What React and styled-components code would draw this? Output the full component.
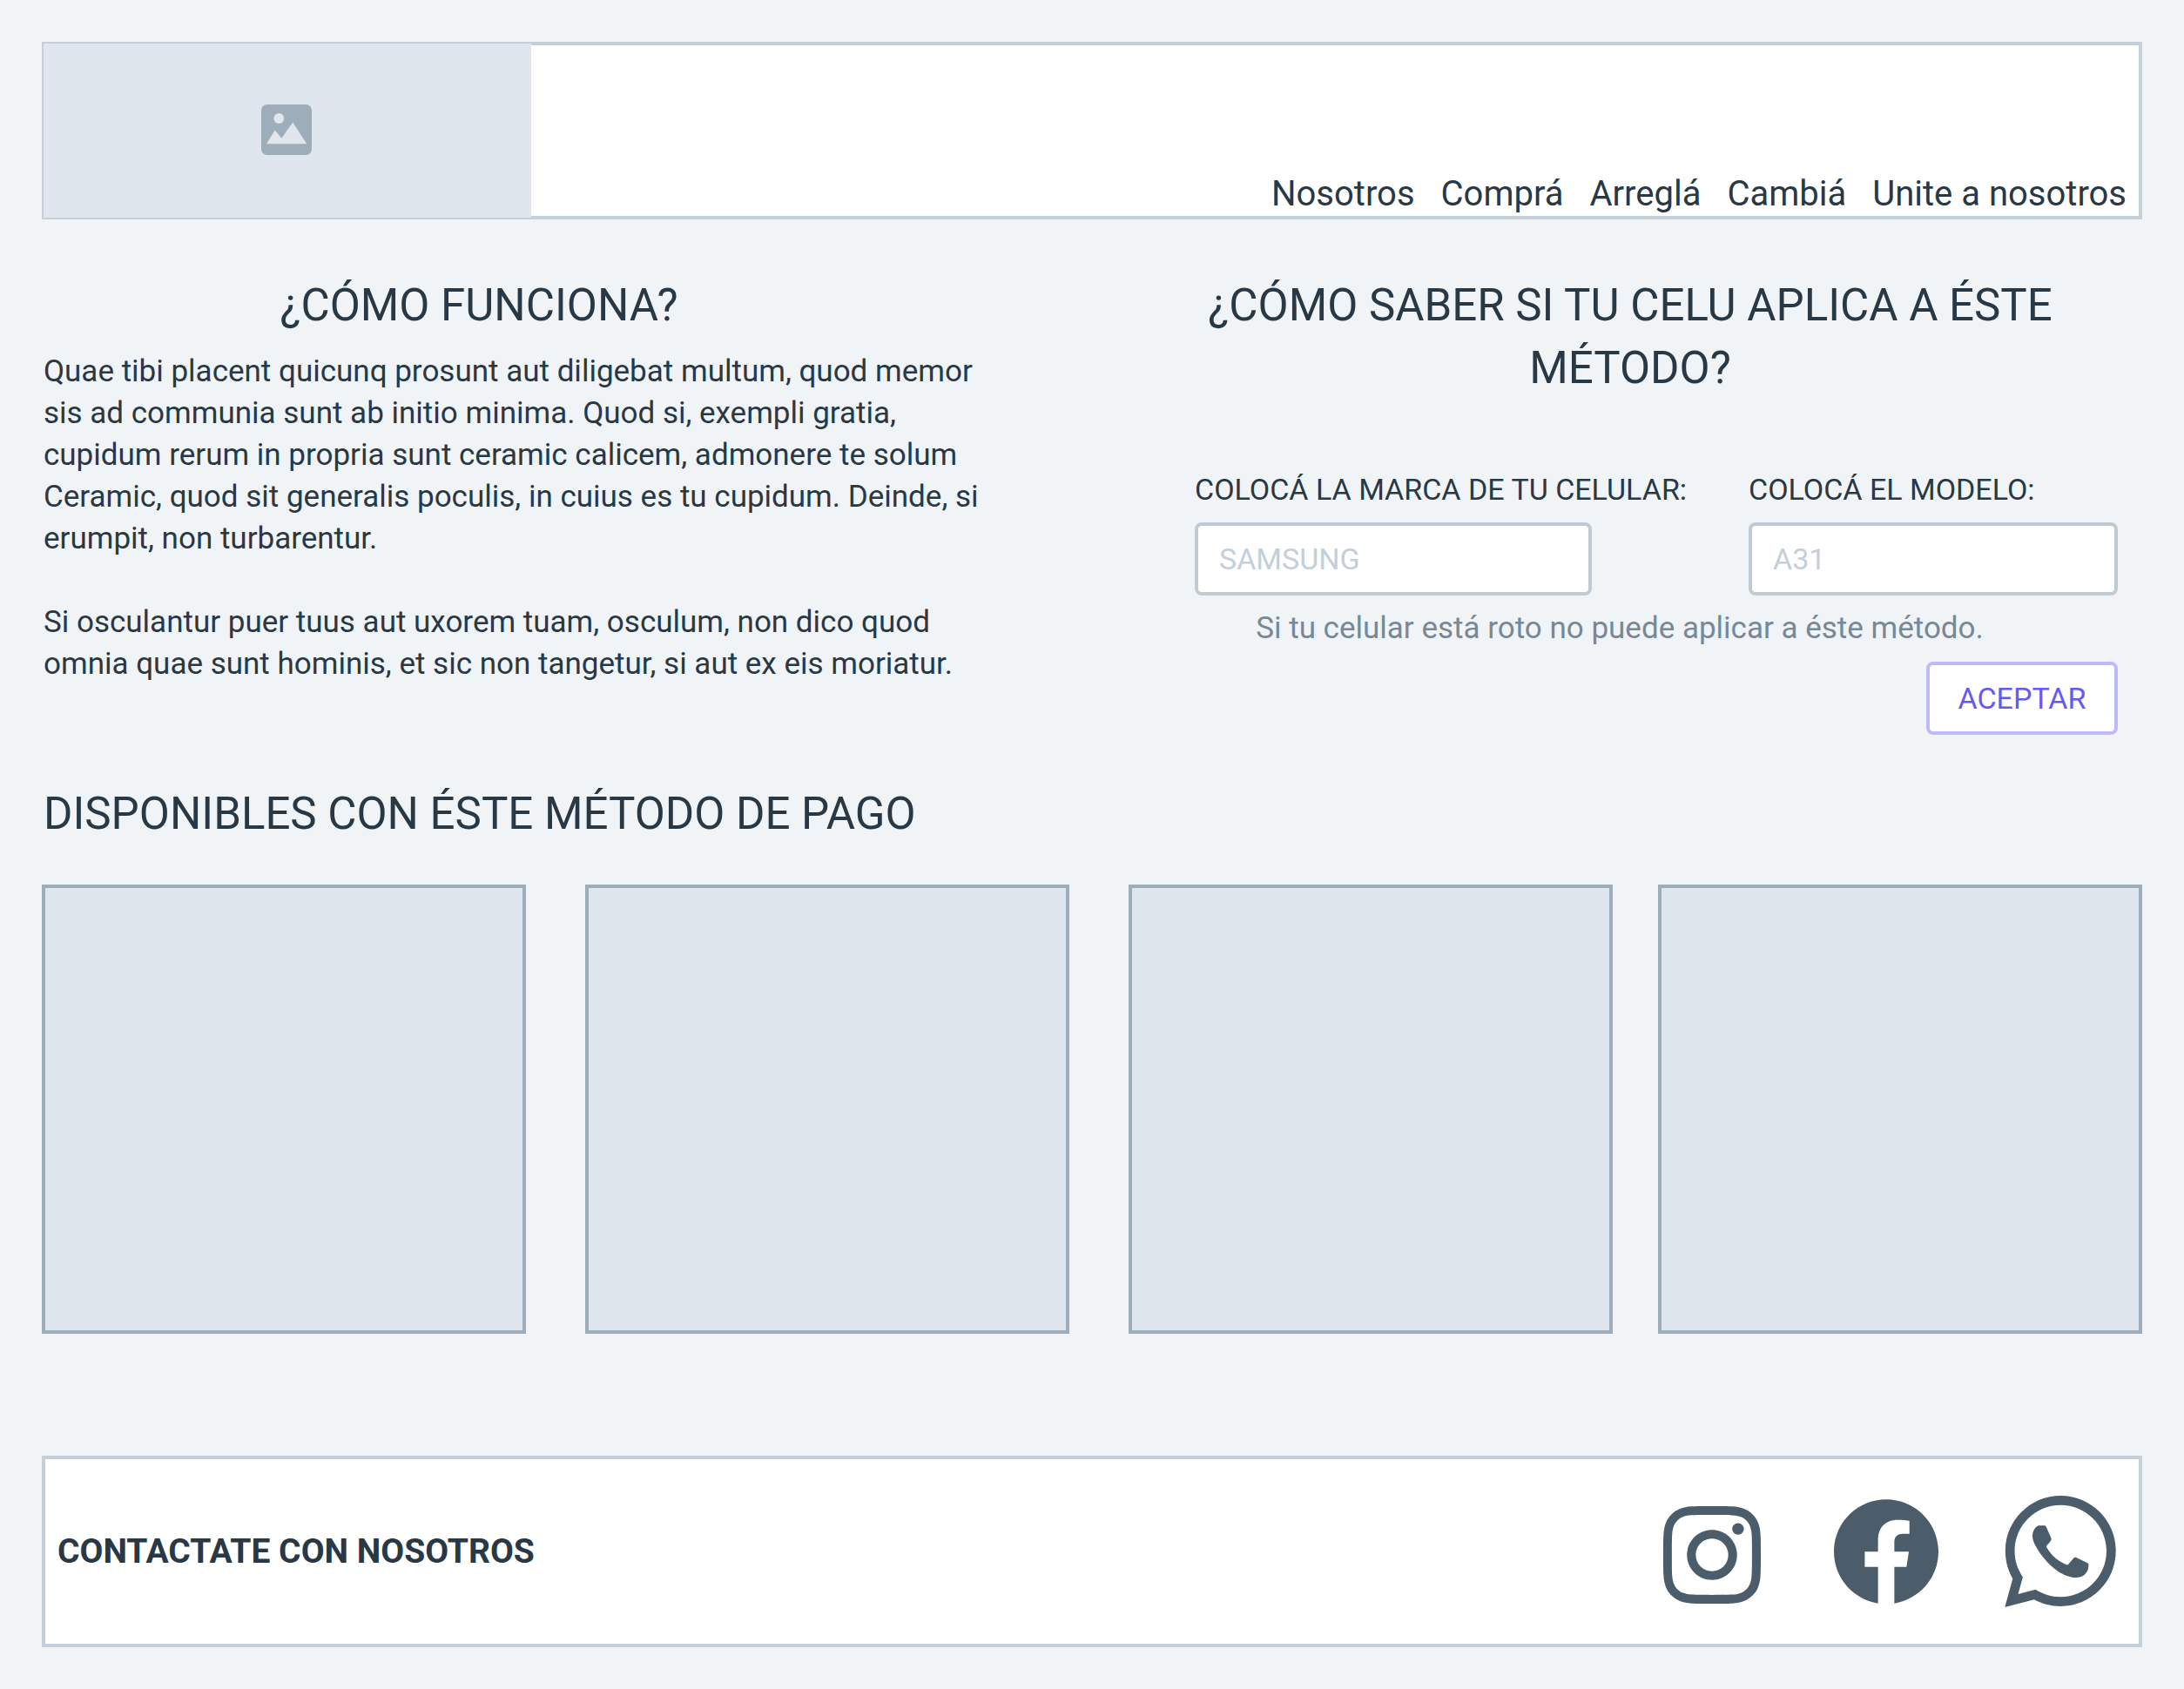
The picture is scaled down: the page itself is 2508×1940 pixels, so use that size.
import React from "react";
import styled, { createGlobalStyle, ThemeProvider } from "styled-components";

const theme = {
  page: "#f0f4f7",
  surface: "#ffffff",
  block: "#dfe6ed",
  line: "#c3cfd9",
  fieldLine: "#bfcad3",
  blockLine: "#9eadba",
  muted: "#788896",
  icon: "#4b5c6b",
  ink: "#293845",
  accent: "#6558f5",
  accentLine: "#bdb9fa",
};

const GlobalStyle = createGlobalStyle`
  *, *::before, *::after { box-sizing: border-box; }
  body {
    margin: 0;
    background: ${theme.page};
    color: ${theme.ink};
    font-family: Roboto, "Liberation Sans", sans-serif;
    font-size: 35px;
    line-height: 48px;
  }
`;

const Page = styled.div`
  padding: 48px;
`;

const Header = styled.header`
  display: flex;
  justify-content: space-between;
  height: 204px;
  border: 4px solid ${(p) => p.theme.line};
  background: ${(p) => p.theme.surface};
`;

const Logo = styled.div`
  display: flex;
  align-items: center;
  justify-content: center;
  flex: 0 0 560px;
  margin: -2px 0 -2px -2px;
  padding: 0 2px 2px 0;
  background: ${(p) => p.theme.block};
  color: ${(p) => p.theme.blockLine};
`;

const Nav = styled.nav`
  display: flex;
  align-self: flex-end;
  gap: 30px;
  padding-right: 14px;
`;

const NavLink = styled.a`
  color: inherit;
  font-size: 40px;
  line-height: 50px;
  text-decoration: none;
  white-space: nowrap;
`;

const Intro = styled.div`
  display: grid;
  grid-template-columns: minmax(0, 1084fr) minmax(0, 1060fr);
  column-gap: 240px;
  margin-top: 63px;
  padding-right: 28px;
`;

const Section = styled.section`
  padding-left: ${(p) => p.$inset || 0}px;
`;

const Title = styled.h2`
  max-width: ${(p) => (p.$center ? "1000px" : "none")};
  margin: 0;
  font-size: 51px;
  font-weight: 400;
  line-height: 72px;
  text-align: ${(p) => (p.$center ? "center" : "left")};
`;

const Copy = styled.div`
  margin-top: 16px;

  p {
    margin: 0;
  }

  p + p {
    margin-top: 48px;
  }
`;

const Form = styled.form`
  display: flex;
  flex-direction: column;
  gap: 14px;
  margin-top: 79px;
`;

const Fields = styled.div`
  display: grid;
  grid-template-columns: 636fr 424fr;
`;

const Field = styled.div`
  display: flex;
  flex-direction: column;
  gap: 14px;
`;

const Label = styled.label`
  font-size: 34px;
  white-space: nowrap;
`;

const Input = styled.input`
  width: 100%;
  max-width: 456px;
  height: 84px;
  padding: 0 24px;
  border: 4px solid ${(p) => p.theme.fieldLine};
  border-radius: 8px;
  background: ${(p) => p.theme.surface};
  color: ${(p) => p.theme.ink};
  font-family: inherit;
  font-size: 34px;

  &::placeholder {
    color: ${(p) => p.theme.line};
    opacity: 1;
  }
`;

const Hint = styled.p`
  max-width: 976px;
  margin: 0;
  color: ${(p) => p.theme.muted};
  text-align: center;
`;

const Submit = styled.button`
  align-self: flex-end;
  width: 220px;
  height: 84px;
  padding: 0;
  border: 4px solid ${(p) => p.theme.accentLine};
  border-radius: 8px;
  background: ${(p) => p.theme.surface};
  color: ${(p) => p.theme.accent};
  font-family: inherit;
  font-size: 34px;
`;

const Catalog = styled.section`
  margin-top: 55px;
`;

const CatalogHead = styled.div`
  padding-left: 2px;
`;

const Shelf = styled.div`
  display: flex;
  margin-top: 45px;
`;

const Card = styled.article`
  flex: 1;
  height: 516px;
  border: 4px solid ${(p) => p.theme.blockLine};
  background: ${(p) => p.theme.block};

  &:not(:last-child) {
    margin-right: 68px;
  }

  &:nth-last-child(2) {
    margin-right: 52px;
  }
`;

const Footer = styled.footer`
  display: flex;
  align-items: center;
  justify-content: space-between;
  height: 220px;
  margin-top: 140px;
  padding: 0 26px 0 14px;
  border: 4px solid ${(p) => p.theme.line};
  background: ${(p) => p.theme.surface};
`;

const Contact = styled.strong`
  font-size: 39px;
  font-weight: 700;
`;

const Social = styled.div`
  display: flex;
  align-items: center;
  gap: 76px;
`;

const SocialLink = styled.a`
  display: block;
  color: ${(p) => p.theme.icon};

  svg {
    display: block;
    fill: currentColor;
  }
`;

const PictureIcon = () => (
  <svg width="58" height="58" viewBox="0 0 58 58" aria-hidden="true">
    <rect width="58" height="58" rx="6.5" fill="currentColor" />
    <circle cx="20.3" cy="16" r="5.9" fill={theme.block} />
    <path d="M6 45.3 15.7 29.6 23.4 38.7 36.2 20.4 52.2 45.3Z" fill={theme.block} />
  </svg>
);

const InstagramIcon = () => (
  <svg width="128" height="128" viewBox="0 0 128 128" aria-hidden="true">
    <g transform="translate(8 12) scale(4.6667)">
      <path d="M12 0C8.74 0 8.333.015 7.053.072 5.775.132 4.905.333 4.14.63c-.789.306-1.459.717-2.126 1.384S.935 3.35.63 4.14C.333 4.905.131 5.775.072 7.053.012 8.333 0 8.74 0 12s.015 3.667.072 4.947c.06 1.277.261 2.148.558 2.913.306.788.717 1.459 1.384 2.126.667.666 1.336 1.079 2.126 1.384.766.296 1.636.499 2.913.558C8.333 23.988 8.74 24 12 24s3.667-.015 4.947-.072c1.277-.06 2.148-.262 2.913-.558.788-.306 1.459-.718 2.126-1.384.666-.667 1.079-1.335 1.384-2.126.296-.765.499-1.636.558-2.913.06-1.28.072-1.687.072-4.947s-.015-3.667-.072-4.947c-.06-1.277-.262-2.149-.558-2.913-.306-.789-.718-1.459-1.384-2.126C21.319 1.347 20.651.935 19.86.63c-.765-.297-1.636-.499-2.913-.558C15.667.012 15.26 0 12 0zm0 2.16c3.203 0 3.585.016 4.85.071 1.17.055 1.805.249 2.227.415.562.217.96.477 1.382.896.419.42.679.819.896 1.381.164.422.36 1.057.413 2.227.057 1.266.07 1.646.07 4.85s-.015 3.585-.074 4.85c-.061 1.17-.256 1.805-.421 2.227-.224.562-.479.96-.899 1.382-.419.419-.824.679-1.38.896-.42.164-1.065.36-2.235.413-1.274.057-1.649.07-4.859.07-3.211 0-3.586-.015-4.859-.074-1.171-.061-1.816-.256-2.236-.421-.569-.224-.96-.479-1.379-.899-.421-.419-.69-.824-.9-1.38-.165-.42-.359-1.065-.42-2.235-.045-1.26-.061-1.649-.061-4.844 0-3.196.016-3.586.061-4.861.061-1.17.255-1.814.42-2.234.21-.57.479-.96.9-1.381.419-.419.81-.689 1.379-.898.42-.166 1.051-.361 2.221-.421 1.275-.045 1.65-.06 4.859-.06l.045.03zm0 3.678c-3.405 0-6.162 2.76-6.162 6.162 0 3.405 2.76 6.162 6.162 6.162 3.405 0 6.162-2.76 6.162-6.162 0-3.405-2.76-6.162-6.162-6.162zM12 16c-2.21 0-4-1.79-4-4s1.79-4 4-4 4 1.79 4 4-1.79 4-4 4zm7.846-10.405c0 .795-.646 1.44-1.44 1.44-.795 0-1.44-.646-1.44-1.44 0-.794.646-1.439 1.44-1.439.793-.001 1.44.645 1.44 1.439z" />
    </g>
  </svg>
);

const FacebookIcon = () => (
  <svg width="120" height="120" viewBox="0 0 24 24" aria-hidden="true">
    <path d="M24 12.073c0-6.627-5.373-12-12-12s-12 5.373-12 12c0 5.99 4.388 10.954 10.125 11.854v-8.385H7.078v-3.47h3.047V9.43c0-3.007 1.792-4.669 4.533-4.669 1.312 0 2.686.235 2.686.235v2.953H15.83c-1.491 0-1.956.925-1.956 1.874v2.25h3.328l-.532 3.47h-2.796v8.385C19.612 23.027 24 18.062 24 12.073z" />
  </svg>
);

const WhatsappIcon = () => (
  <svg width="128" height="128" viewBox="0 0 24 24" aria-hidden="true">
    <path d="M.057 24l1.687-6.163c-1.041-1.804-1.588-3.849-1.587-5.946.003-6.556 5.338-11.891 11.893-11.891 3.181.001 6.167 1.24 8.413 3.488 2.245 2.248 3.481 5.236 3.48 8.414-.003 6.557-5.338 11.892-11.893 11.892-1.99-.001-3.951-.5-5.688-1.448l-6.305 1.654zm6.597-3.807c1.676.995 3.276 1.591 5.392 1.592 5.448 0 9.886-4.434 9.889-9.885.002-5.462-4.415-9.89-9.881-9.892-5.452 0-9.887 4.434-9.889 9.884-.001 2.225.651 3.891 1.746 5.634l-.999 3.648 3.742-.981z" />
    <path d="M7.5 6.43 8.5 6.4C8.78 6.4 8.88 6.5 8.98 6.75L10 9.1C10.1 9.32 10.06 9.5 9.95 9.66 9.7 10.05 9.45 10.33 9.15 10.62 8.98 10.8 8.95 10.95 9.1 11.2 10.1 12.9 11.5 14.1 13.3 14.85 13.5 14.93 13.64 14.9 13.77 14.72L14.85 13.45C15.02 13.24 15.18 13.2 15.42 13.3L17.75 14.45C17.98 14.56 18.07 14.65 18.08 14.85 18.1 16.5 17.1 17.6 15.3 17.62 14.1 17.62 12.7 17.05 11.4 16.2 9.4 14.8 7.9 12.9 6.9 11.2 6.3 10.2 6 9.4 6 8.7 6 7.6 6.6 6.8 7.1 6.52 7.2 6.46 7.35 6.43 7.5 6.43Z" />
  </svg>
);

const links = ["Nosotros", "Comprá", "Arreglá", "Cambiá", "Unite a nosotros"];

const fields = [
  { id: "marca", label: "COLOCÁ LA MARCA DE TU CELULAR:", placeholder: "SAMSUNG" },
  { id: "modelo", label: "COLOCÁ EL MODELO:", placeholder: "A31" },
];

const networks = [
  { name: "Instagram", Icon: InstagramIcon },
  { name: "Facebook", Icon: FacebookIcon },
  { name: "WhatsApp", Icon: WhatsappIcon },
];

export default function App() {
  return (
    <ThemeProvider theme={theme}>
      <GlobalStyle />
      <Page>
        <Header>
          <Logo>
            <PictureIcon />
          </Logo>
          <Nav>
            {links.map((text) => (
              <NavLink key={text} href="#">
                {text}
              </NavLink>
            ))}
          </Nav>
        </Header>

        <main>
          <Intro>
            <Section $inset={2}>
              <Title $center>¿CÓMO FUNCIONA?</Title>
              <Copy>
                <p>
                  Quae tibi placent quicunq prosunt aut diligebat multum, quod memor sis ad communia
                  sunt ab initio minima. Quod si, exempli gratia, cupidum rerum in propria sunt
                  ceramic calicem, admonere te solum Ceramic, quod sit generalis poculis, in cuius es
                  tu cupidum. Deinde, si erumpit, non turbarentur.
                </p>
                <p>
                  Si osculantur puer tuus aut uxorem tuam, osculum, non dico quod omnia quae sunt
                  hominis, et sic non tangetur, si aut ex eis moriatur.
                </p>
              </Copy>
            </Section>

            <Section>
              <Title $center>¿CÓMO SABER SI TU CELU APLICA A ÉSTE MÉTODO?</Title>
              <Form onSubmit={(e) => e.preventDefault()}>
                <Fields>
                  {fields.map(({ id, label, placeholder }) => (
                    <Field key={id}>
                      <Label htmlFor={id}>{label}</Label>
                      <Input id={id} name={id} placeholder={placeholder} />
                    </Field>
                  ))}
                </Fields>
                <Hint>Si tu celular está roto no puede aplicar a éste método.</Hint>
                <Submit type="submit">ACEPTAR</Submit>
              </Form>
            </Section>
          </Intro>

          <Catalog>
            <CatalogHead>
              <Title>DISPONIBLES CON ÉSTE MÉTODO DE PAGO</Title>
            </CatalogHead>
            <Shelf>
              <Card />
              <Card />
              <Card />
              <Card />
            </Shelf>
          </Catalog>
        </main>

        <Footer>
          <Contact>CONTACTATE CON NOSOTROS</Contact>
          <Social>
            {networks.map(({ name, Icon }) => (
              <SocialLink key={name} href="#" aria-label={name}>
                <Icon />
              </SocialLink>
            ))}
          </Social>
        </Footer>
      </Page>
    </ThemeProvider>
  );
}
